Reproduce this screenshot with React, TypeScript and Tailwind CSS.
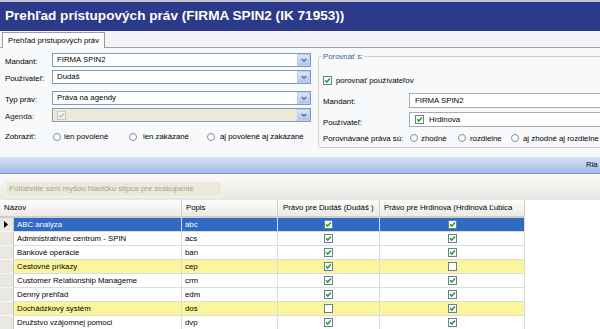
import clsx from "clsx";

type Row = { name: string; code: string; a: boolean; b: boolean };

const rows: Row[] = [
  { name: "ABC analýza", code: "abc", a: true, b: true },
  { name: "Administratívne centrum - SPIN", code: "acs", a: true, b: true },
  { name: "Bankové operácie", code: "ban", a: true, b: true },
  { name: "Cestovné príkazy", code: "cep", a: true, b: false },
  { name: "Customer Relationship Manageme", code: "crm", a: true, b: true },
  { name: "Denný prehľad", code: "edm", a: true, b: true },
  { name: "Dochádzkový systém", code: "dos", a: false, b: true },
  { name: "Družstvo vzájomnej pomoci", code: "dvp", a: true, b: true },
];

function Check({ on, disabled }: { on: boolean; disabled?: boolean }) {
  return (
    <span
      className={clsx(
        "inline-flex w-[9px] h-[9px] shrink-0 items-center justify-center border",
        disabled ? "border-[#c9c6b4] bg-[#f4f3ee]" : "border-[#6c7d96] bg-white"
      )}
    >
      {on && (
        <svg viewBox="0 0 8 8" className="w-[7px] h-[7px]">
          <path
            d="M1.2 3.8 L3.1 5.8 L6.8 1.8"
            stroke={disabled ? "#c4c2b4" : "#22a122"}
            strokeWidth="1.7"
            fill="none"
          />
        </svg>
      )}
    </span>
  );
}

function Radio({ on }: { on?: boolean }) {
  return (
    <span className="inline-flex w-[8px] h-[8px] shrink-0 rounded-full border border-[#7d8ea6] bg-white items-center justify-center">
      {on && <span className="w-[4px] h-[4px] rounded-full bg-[#3ba83b]" />}
    </span>
  );
}

function Combo({ value, disabled }: { value?: string; disabled?: boolean }) {
  return (
    <div
      className={clsx(
        "h-[14px] w-[259px] border border-[#7f9db9] flex items-center",
        disabled ? "bg-[#ece9d8]" : "bg-white"
      )}
    >
      <div className="flex-1 pl-[4px] flex items-center whitespace-nowrap">
        {disabled ? <Check on disabled /> : value}
      </div>
      <div className="w-[13px] h-[12px] bg-gradient-to-b from-[#dce6fc] to-[#b1c4f0] border border-[#bccdf2] flex items-center justify-center">
        <svg viewBox="0 0 8 6" className="w-[6px] h-[5px]">
          <path d="M1 1 L4 4 L7 1" stroke="#4b5f8c" strokeWidth="1.6" fill="none" />
        </svg>
      </div>
    </div>
  );
}

function Input({ children }: { children: React.ReactNode }) {
  return (
    <div className="h-[15px] flex-1 border border-[#a5acb5] bg-white flex items-center pl-[5px] gap-[3px] whitespace-nowrap">
      {children}
    </div>
  );
}

function Label({ w, children }: { w: string; children: React.ReactNode }) {
  return (
    <span className={clsx(w, "h-[14px] shrink-0 flex items-center pt-[3px] leading-none")}>
      {children}
    </span>
  );
}

export default function App() {
  return (
    <div className="w-[600px] h-[329px] overflow-hidden bg-white text-[7.8px] text-black font-['Liberation_Sans',Arial,sans-serif] flex flex-col">
      {/* title */}
      <div className="h-[2px] bg-[#c3c6cf] shrink-0" />
      <div className="h-[29px] shrink-0 bg-[#2c3a8b] text-white font-bold text-[13.6px] pl-[5px] flex items-center whitespace-nowrap">
        Prehľad prístupových práv (FIRMA SPIN2 (IK 71953))
      </div>

      {/* tabs */}
      <div className="h-[17px] shrink-0 bg-[#f3f4f7] border-b border-[#a3a3a3] flex items-end pl-[2px]">
        <div className="h-[16px] w-[103px] bg-white border border-b-0 border-[#9c9c9c] flex items-center justify-center -mb-[1px]">
          Prehľad prístupových práv
        </div>
      </div>

      {/* form */}
      <div className="h-[109px] shrink-0 bg-[#f8f9fb] flex overflow-hidden">
        <div className="w-[312px] shrink-0 pt-[5px] pl-[5px] flex flex-col">
          <div className="flex items-center">
            <Label w="w-[47px]">Mandant:</Label>
            <Combo value="FIRMA SPIN2" />
          </div>
          <div className="flex items-center mt-[3px]">
            <Label w="w-[47px]">Používateľ:</Label>
            <Combo value="Dudáš" />
          </div>
          <div className="flex items-center mt-[7px]">
            <Label w="w-[47px]">Typ práv:</Label>
            <Combo value="Práva na agendy" />
          </div>
          <div className="flex items-center mt-[3px]">
            <Label w="w-[47px] text-[#222]">Agenda:</Label>
            <Combo disabled />
          </div>
          <div className="flex items-center mt-[9px] h-[12px] whitespace-nowrap">
            <span className="w-[48px]">Zobraziť:</span>
            <Radio />
            <span className="ml-[3px] w-[65px]">len povolené</span>
            <Radio />
            <span className="ml-[6px] w-[64px]">len zakázané</span>
            <Radio />
            <span className="ml-[5px]">aj povolené aj zakázané</span>
          </div>
        </div>

        <fieldset className="ml-[6px] mt-[3px] w-[300px] h-[97px] shrink-0 border border-[#d3d2c4] rounded-[3px] pl-[4px]">
          <legend className="px-[1px] ml-[-1px] text-[#3d5a98]">Porovnať s:</legend>
          <div className="flex items-center gap-[4px] mt-[12px]">
            <Check on />
            <span>porovnať používateľov</span>
          </div>
          <div className="flex items-center mt-[7px]">
            <Label w="w-[86px]">Mandant:</Label>
            <Input>FIRMA SPIN2</Input>
          </div>
          <div className="flex items-center mt-[4px]">
            <span className="w-[86px] h-[15px] flex items-center pt-[6px] leading-none">Používateľ:</span>
            <Input>
              <Check on />
              <span className="ml-[2px]">Hrdinova</span>
            </Input>
          </div>
          <div className="flex items-center mt-[5px] h-[12px] whitespace-nowrap">
            <span className="w-[87px]">Porovnávané práva sú:</span>
            <Radio />
            <span className="ml-[3px] w-[37px]">zhodné</span>
            <Radio />
            <span className="ml-[4px] w-[41px]">rozdielne</span>
            <Radio />
            <span className="ml-[4px]">aj zhodné aj rozdielne</span>
          </div>
        </fieldset>
      </div>

      {/* blue bar */}
      <div className="h-[17px] shrink-0 bg-gradient-to-b from-[#d8e3f6] to-[#a5bde9] border-b border-[#7593c9] pl-[586px] flex items-center whitespace-nowrap overflow-hidden">
        Ria
      </div>

      {/* group panel */}
      <div className="h-[26px] shrink-0 bg-gradient-to-b from-[#fbfbfa] to-[#e7e7e3] pl-[5px] pt-[7px]">
        <div className="w-[217px] h-[16px] bg-[#ece9d8] border border-[#f6f5ee] text-[#a4a29a] flex items-center pl-[3px] whitespace-nowrap">
          Potiahnite sem myšou hlavičku stĺpca pre zoskupenie
        </div>
      </div>

      {/* grid */}
      <div className="flex-1 bg-white flex flex-col">
        <div className="h-[18px] shrink-0 flex">
          <div className="w-[182px] bg-gradient-to-b from-[#fdfdfc] to-[#ebeae5] border-r border-b-2 border-[#cfcec6] pl-[4px] flex items-center">
            Názov
          </div>
          <div className="w-[96px] bg-gradient-to-b from-[#fdfdfc] to-[#ebeae5] border-r border-b-2 border-[#cfcec6] pl-[4px] flex items-center">
            Popis
          </div>
          <div className="w-[102px] bg-gradient-to-b from-[#fdfdfc] to-[#ebeae5] border-r border-b-2 border-[#cfcec6] pl-[5px] flex items-center whitespace-nowrap">
            Právo pre Dudáš (Dudáš )
          </div>
          <div className="w-[145px] bg-gradient-to-b from-[#fdfdfc] to-[#ebeae5] border-r border-b-2 border-[#cfcec6] pl-[4px] flex items-center whitespace-nowrap overflow-hidden">
            Právo pre Hrdinova (Hrdinová Ľubica
          </div>
        </div>

        {rows.map((r, i) => {
          const sel = i === 0;
          const diff = r.a !== r.b;
          return (
            <div key={r.code} className="h-[14px] shrink-0 flex">
              <div className="w-[14px] bg-[#e9e8e2] border-r border-b border-r-[#c8c7bf] border-b-[#f8f8f5] flex items-center pl-[4px]">
                {sel && (
                  <svg viewBox="0 0 4 7" className="w-[4px] h-[7px]">
                    <path d="M0 0 L4 3.5 L0 7 Z" fill="#000" />
                  </svg>
                )}
              </div>
              <div
                className={clsx(
                  "w-[511px] flex",
                  sel ? "bg-[#316ac5] text-white" : diff ? "bg-[#fbf59c]" : "bg-white"
                )}
              >
                <div className="w-[168px] border-r border-b border-[#dcdcdc] pl-[3px] flex items-center whitespace-nowrap overflow-hidden">
                  {r.name}
                </div>
                <div className="w-[96px] border-r border-b border-[#dcdcdc] pl-[3px] flex items-center">
                  {r.code}
                </div>
                <div className="w-[102px] border-r border-b border-[#dcdcdc] flex items-center justify-center">
                  <Check on={r.a} />
                </div>
                <div className="w-[145px] border-r border-b border-[#dcdcdc] flex items-center justify-center">
                  <Check on={r.b} />
                </div>
              </div>
            </div>
          );
        })}
      </div>
    </div>
  );
}
